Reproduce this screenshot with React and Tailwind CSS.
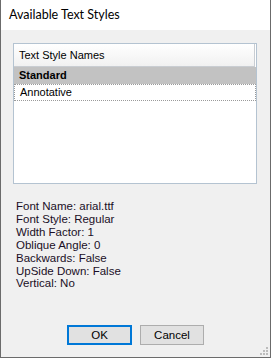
export default function App() {
  const info = [
    "Font Name: arial.ttf",
    "Font Style: Regular",
    "Width Factor: 1",
    "Oblique Angle: 0",
    "Backwards: False",
    "UpSide Down: False",
    "Vertical: No",
  ];
  return (
    <div className="w-[271px] h-[358px] flex flex-col border-l border-r border-b border-[#6b6b6b] bg-[#f0f0f0] text-black" style={{ fontFamily: '"Liberation Sans", Arial, sans-serif' }}>
      <div className="h-[30px] bg-white flex items-center pl-[8px] text-[12.5px]" style={{ fontFamily: 'Lato, "Liberation Sans", sans-serif' }}>
        Available Text Styles
      </div>
      <div className="flex-1 flex flex-col relative">
        <div className="ml-[12px] mt-[13px] w-[244px] h-[141px] border border-[#b4c3d1] bg-white flex flex-col">
          <div className="h-[23px] flex items-center pl-[5px] text-[11px] border-b border-r border-[#c9cdd2] bg-gradient-to-b from-white to-[#f1f1f1] mr-[1px]">
            Text Style Names
          </div>
          <div className="h-[17px] bg-[#c2c2c2] flex items-center pl-[5px] text-[11px] font-bold">Standard</div>
          <div className="h-[17px] flex items-center pl-[5px] text-[11px] border border-dotted border-[#9a9a9a]">Annotative</div>
        </div>
        <div className="ml-[15px] mt-[16px] flex flex-col text-[11.5px] leading-[12.9px] text-[#1a0f26]">
          {info.map((t) => (
            <div key={t}>{t}</div>
          ))}
        </div>
        <div className="flex gap-[8px] ml-[66px] mt-[35px]">
          <div className="w-[65px] h-[20px] border-2 border-[#0078d7] bg-[#e1e1e1] flex items-center justify-center text-[11.5px]">OK</div>
          <div className="w-[64px] h-[20px] border border-[#adadad] bg-[#e1e1e1] flex items-center justify-center text-[11.5px]">Cancel</div>
        </div>
        <svg className="absolute right-[2px] bottom-[2px]" width="8" height="8" viewBox="0 0 8 8">
          <g fill="#bcbcbc">
            <rect x="6" y="0" width="2" height="2" />
            <rect x="3" y="3" width="2" height="2" />
            <rect x="6" y="3" width="2" height="2" />
            <rect x="0" y="6" width="2" height="2" />
            <rect x="3" y="6" width="2" height="2" />
            <rect x="6" y="6" width="2" height="2" />
          </g>
        </svg>
      </div>
    </div>
  );
}
